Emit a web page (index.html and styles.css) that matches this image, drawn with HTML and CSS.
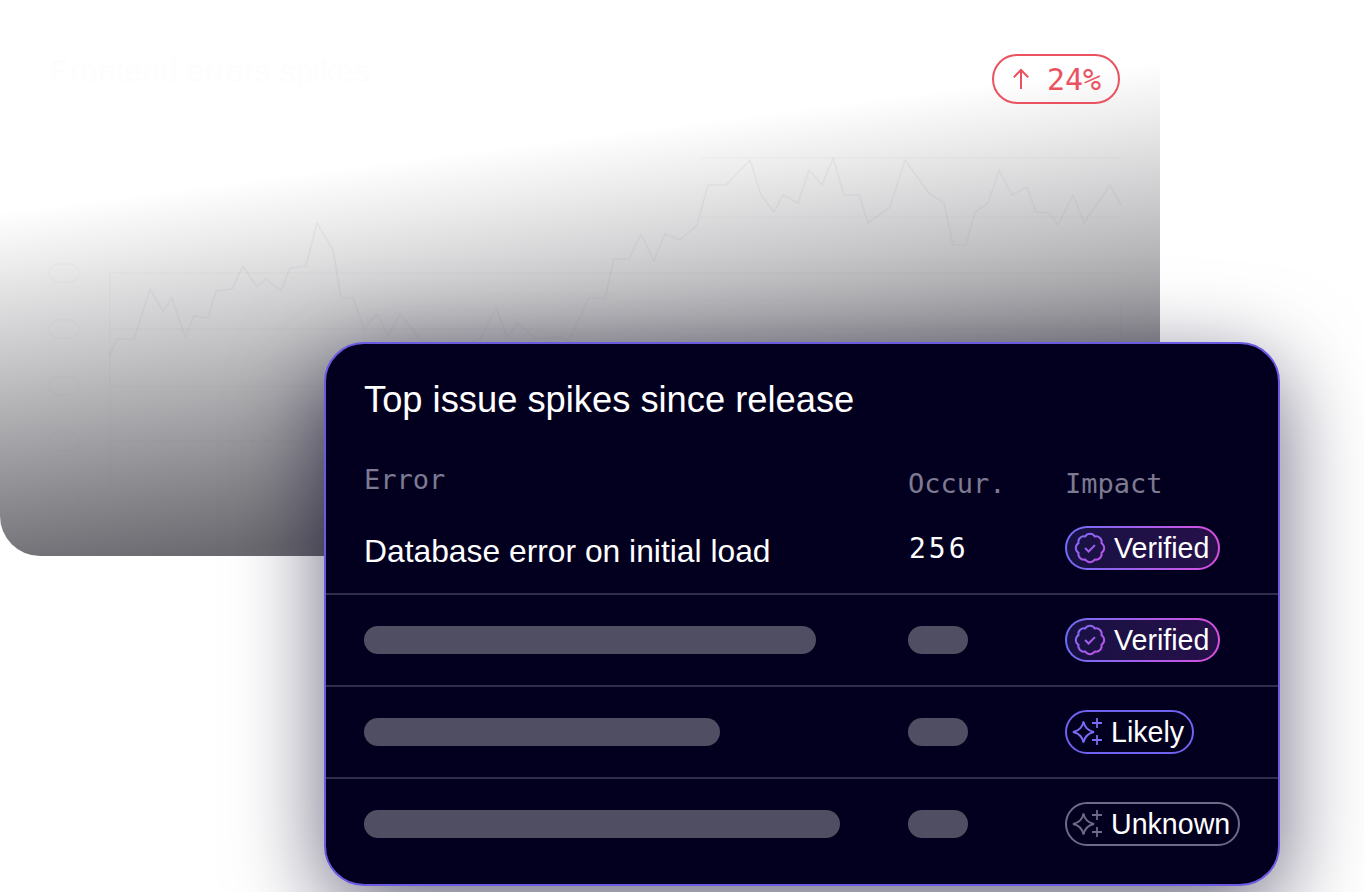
FILE: index.html
```html
<!DOCTYPE html>
<html lang="en">
<head>
<meta charset="utf-8">
<title>Top issue spikes since release</title>
<link rel="stylesheet" href="styles.css">
</head>
<body>
<main class="stage">
  <section class="chart">
    <div class="chart-head">
      <span class="chart-title">Frontend errors spikes</span>
      <span class="delta">
        <svg class="delta-arrow" viewBox="0 0 20 24" aria-hidden="true"><path d="M10 23V2M2 10l8-8 8 8"/></svg>
        <span>24%</span>
      </span>
    </div>
    <svg class="plot" viewBox="0 0 1160 556" aria-hidden="true">
      <g class="plot-grid">
        <path d="M110 273H1121M110 329H1121M110 386H1121M110 441H1121M110 498H1121M110 273V498M1121 300V498M700 158H1121M700 217H1121"/>
        <rect x="49" y="264" width="30" height="18" rx="9"/>
        <rect x="49" y="320" width="30" height="18" rx="9"/>
        <rect x="49" y="377" width="30" height="18" rx="9"/>
        <rect x="49" y="432" width="30" height="18" rx="9"/>
        <rect x="49" y="489" width="30" height="18" rx="9"/>
      </g>
      <polyline class="plot-line" points="109,357 117,339 134,339 150,289 163,311 172,298 185,337 194,316 208,318 216,291 232,289 243,266 257,287 266,279 281,291 290,268 306,266 317,223 333,250 341,298 353,298 364,329 377,314 388,336 400,314 420,339 450,350 480,339 496,307 507,337 518,323 536,339 558,337 569,341 589,298 605,298 614,259 629,259 641,234 654,261 665,234 680,240 697,225 708,185 726,185 750,160 761,195 774,212 783,195 798,203 809,170 822,185 833,158 844,195 859,195 868,223 890,207 905,160 929,193 944,203 953,245 966,245 975,212 988,203 999,170 1012,195 1027,187 1036,212 1049,213 1058,225 1073,195 1084,223 1110,185 1121,205"/>
    </svg>
  </section>

  <section class="card">
    <h1 class="card-title">Top issue spikes since release</h1>
    <div class="row row-head">
      <span class="col-label col-label-raised">Error</span>
      <span class="col-label">Occur.</span>
      <span class="col-label">Impact</span>
    </div>
    <div class="row">
      <span class="issue">Database error on initial load</span>
      <span class="count">256</span>
      <span class="pill pill-verified">
        <svg class="pill-icon" viewBox="0 0 24 24" aria-hidden="true">
          <defs><linearGradient id="badge-a" x1="0" y1="0" x2="1" y2="1"><stop offset="0" stop-color="#7a6cf6"/><stop offset="1" stop-color="#c24fe6"/></linearGradient></defs>
          <path stroke="url(#badge-a)" d="M3.85 8.62a4 4 0 0 1 4.78-4.77 4 4 0 0 1 6.74 0 4 4 0 0 1 4.78 4.78 4 4 0 0 1 0 6.74 4 4 0 0 1-4.77 4.78 4 4 0 0 1-6.75 0 4 4 0 0 1-4.78-4.77 4 4 0 0 1 0-6.76Z"/>
          <path stroke="url(#badge-a)" d="m8.500 12 2.500 2.500 4.500-4.500"/>
        </svg>
        Verified
      </span>
    </div>
    <div class="row">
      <span class="bar bar-a"></span>
      <span class="bar bar-count"></span>
      <span class="pill pill-verified">
        <svg class="pill-icon" viewBox="0 0 24 24" aria-hidden="true">
          <path stroke="url(#badge-a)" d="M3.85 8.62a4 4 0 0 1 4.78-4.77 4 4 0 0 1 6.74 0 4 4 0 0 1 4.78 4.78 4 4 0 0 1 0 6.74 4 4 0 0 1-4.77 4.78 4 4 0 0 1-6.75 0 4 4 0 0 1-4.78-4.77 4 4 0 0 1 0-6.76Z"/>
          <path stroke="url(#badge-a)" d="m8.500 12 2.500 2.500 4.500-4.500"/>
        </svg>
        Verified
      </span>
    </div>
    <div class="row">
      <span class="bar bar-b"></span>
      <span class="bar bar-count"></span>
      <span class="pill pill-likely">
        <svg class="spark" viewBox="0 0 32 32" aria-hidden="true"><path d="M11.5 5.5Q13 14 22 16 13 18 11.5 26.5 10 18 1 16 10 14 11.5 5.5ZM25 2v10M20 7h10M25 19v10M20 24h10"/></svg>
        Likely
      </span>
    </div>
    <div class="row row-last">
      <span class="bar bar-c"></span>
      <span class="bar bar-count"></span>
      <span class="pill pill-unknown">
        <svg class="spark" viewBox="0 0 32 32" aria-hidden="true"><path d="M11.5 5.5Q13 14 22 16 13 18 11.5 26.5 10 18 1 16 10 14 11.5 5.5ZM25 2v10M20 7h10M25 19v10M20 24h10"/></svg>
        Unknown
      </span>
    </div>
  </section>
</main>
</body>
</html>
```
FILE: styles.css
```css
* { box-sizing: border-box; }
html, body { margin: 0; height: 100%; background: #fff; overflow: hidden; }
body { font-family: "Liberation Sans", Arial, sans-serif; }

.stage {
  position: relative;
  width: 1364px;
  height: 892px;
  overflow: hidden;
  padding: 342px 0 0 324px;
}

/* Background chart, lying under the card */
.chart {
  position: absolute;
  left: 0;
  top: 0;
  width: 1160px;
  height: 556px;
  border-radius: 40px;
  background: linear-gradient(172.6deg, rgba(10,8,18,0) 30%, rgba(10,8,18,.08) 38%, rgba(10,8,18,.24) 52%, rgba(10,8,18,.46) 70%, rgba(10,8,18,.6) 82%, rgba(10,8,18,.66) 100%);
}
.chart-head {
  display: flex;
  justify-content: space-between;
  align-items: flex-start;
  padding: 54px 40px 0 50px;
}
.chart-title { font-size: 32px; line-height: 34px; color: #fdfdfd; }
.delta {
  display: flex;
  align-items: center;
  gap: 17px;
  height: 50px;
  width: 128px;
  padding-left: 18px;
  border: 2px solid #ea525f;
  border-radius: 25px;
  color: #ea525f;
  font: 30px "DejaVu Sans Mono", monospace;
}
.delta-arrow { width: 18px; height: 22px; flex: none; fill: none; stroke: #ea525f; stroke-width: 2.2; }
.plot { position: absolute; left: 0; top: 0; width: 1160px; height: 556px; fill: none; }
.plot-grid { stroke: rgba(120,120,130,.04); stroke-width: 1.5; }
.plot-line { stroke: rgba(130,130,140,.09); stroke-width: 1.6; stroke-linejoin: round; }

/* Foreground card */
.card {
  position: relative;
  width: 956px;
  height: 544px;
  border: 2px solid #6a5be2;
  border-radius: 40px;
  background: #03001f;
  box-shadow: 0 24px 90px 0 rgba(6,3,40,.6);
  padding-top: 34px;
  color: #fff;
}
.card-title {
  margin: 0 0 0 38px;
  font-size: 36.3px;
  font-weight: 400;
  line-height: 44px;
}
.row {
  display: grid;
  grid-template-columns: 544px 157px 1fr;
  align-items: center;
  height: 92px;
  padding-left: 38px;
  border-bottom: 2px solid #2f2d4a;
}
.row-head { height: 34px; margin-top: 41px; margin-bottom: 6px; border-bottom: 0; align-items: end; }
.row-last { border-bottom-color: transparent; }
.col-label { font: 27px/34px "DejaVu Sans Mono", monospace; font-weight: 400; color: #7d7a92; }
.col-label-raised { margin-bottom: 4px; }
.issue { font-size: 31.8px; margin-top: 6px; }
.count { font: 28px "DejaVu Sans Mono", monospace; letter-spacing: 3px; padding-left: 1px; }
.bar { display: block; height: 28px; border-radius: 14px; background: #504e62; }
.bar-a { width: 452px; }
.bar-b { width: 356px; }
.bar-c { width: 476px; }
.bar-count { width: 60px; }

.pill {
  display: inline-flex;
  align-items: center;
  justify-self: start;
  height: 44px;
  border-radius: 22px;
  border: 2px solid transparent;
  font-size: 28.6px;
  white-space: nowrap;
}
.pill-verified {
  width: 155px;
  gap: 7px;
  padding-left: 6px;
  background: linear-gradient(90deg, #181143, #27104a) padding-box, linear-gradient(90deg, #6f6ef6, #dc4fe0) border-box;
}
.pill-likely { width: 129px; gap: 7px; padding-left: 5px; border-color: #6f62f0; }
.pill-unknown { width: 175px; gap: 7px; padding-left: 5px; border-color: #6e6a86; }
.pill-icon { width: 34px; height: 34px; flex: none; fill: none; stroke-width: 1.4; }
.spark { width: 32px; height: 32px; flex: none; fill: none; stroke-width: 1.8; }
.pill-likely .spark { stroke: #7a6cf6; }
.pill-unknown .spark { stroke: #6e6a86; }
```
